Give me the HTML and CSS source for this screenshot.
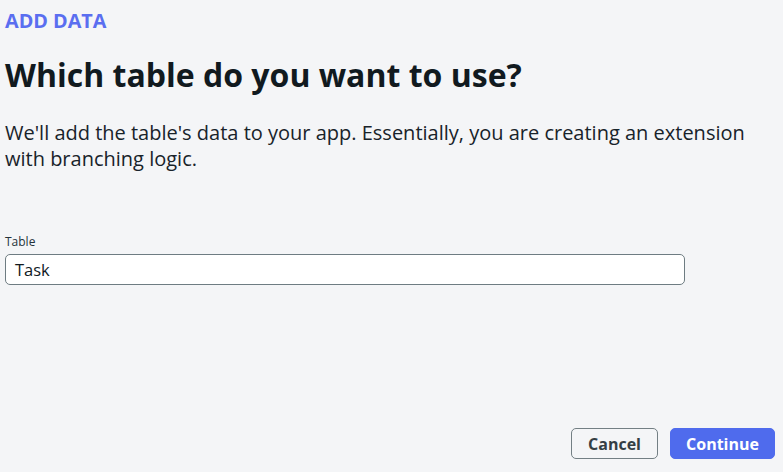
FILE: index.html
```html
<!DOCTYPE html>
<html>
<head>
<meta charset="utf-8">
<link rel="stylesheet" href="styles.css">
</head>
<body>
<div class="page">
  <div class="content">
    <div class="eyebrow">ADD DATA</div>
    <h1 class="title">Which table do you want to use?</h1>
    <p class="desc">We'll add the table's data to your app. Essentially, you are creating an extension with branching logic.</p>
    <div class="field">
      <label class="label">Table</label>
      <div class="input">Task</div>
    </div>
  </div>
  <div class="footer">
    <button class="btn btn-secondary">Cancel</button>
    <button class="btn btn-primary">Continue</button>
  </div>
</div>
</body>
</html>
```
FILE: styles.css
```css
html, body {
  margin: 0;
  padding: 0;
  background: #f4f5f7;
  font-family: "Open Sans", "Noto Sans", sans-serif;
  color: #172b33;
}
.page {
  width: 783px;
  height: 472px;
  display: flex;
  flex-direction: column;
  justify-content: space-between;
  box-sizing: border-box;
}
.content {
  padding: 9px 5px 0 5px;
}
.eyebrow {
  font-size: 19.8px;
  font-weight: 700;
  color: #5a6ef0;
  line-height: 24px;
}
.title {
  margin: 22px 0 0 0;
  font-size: 32px;
  font-weight: 700;
  line-height: 40px;
  color: #111a1f;
}
.desc {
  margin: 25px 0 0 0;
  font-size: 20px;
  line-height: 26px;
  width: 752px;
  color: #18232a;
}
.field {
  margin-top: 63px;
  width: 680px;
}
.label {
  display: block;
  font-size: 12px;
  line-height: 14px;
  color: #25333a;
  margin-bottom: 5px;
}
.input {
  box-sizing: border-box;
  height: 31px;
  border: 1px solid #6e7c82;
  border-radius: 5px;
  background: #fff;
  padding: 0 9px;
  font-size: 16.5px;
  line-height: 29px;
  color: #111a1f;
}
.footer {
  display: flex;
  justify-content: flex-end;
  gap: 12px;
  padding: 0 8px 13px 0;
}
.btn {
  box-sizing: border-box;
  height: 31px;
  border-radius: 5px;
  font-family: "Open Sans", "Noto Sans", sans-serif;
  font-size: 16px;
  font-weight: 700;
  padding: 0;
  cursor: pointer;
}
.btn-secondary {
  width: 87px;
  background: #f4f5f7;
  border: 1px solid #737f84;
  color: #343e44;
}
.btn-primary {
  width: 105px;
  background: #4f6bed;
  border: 1px solid #4f6bed;
  color: #fff;
}
```
